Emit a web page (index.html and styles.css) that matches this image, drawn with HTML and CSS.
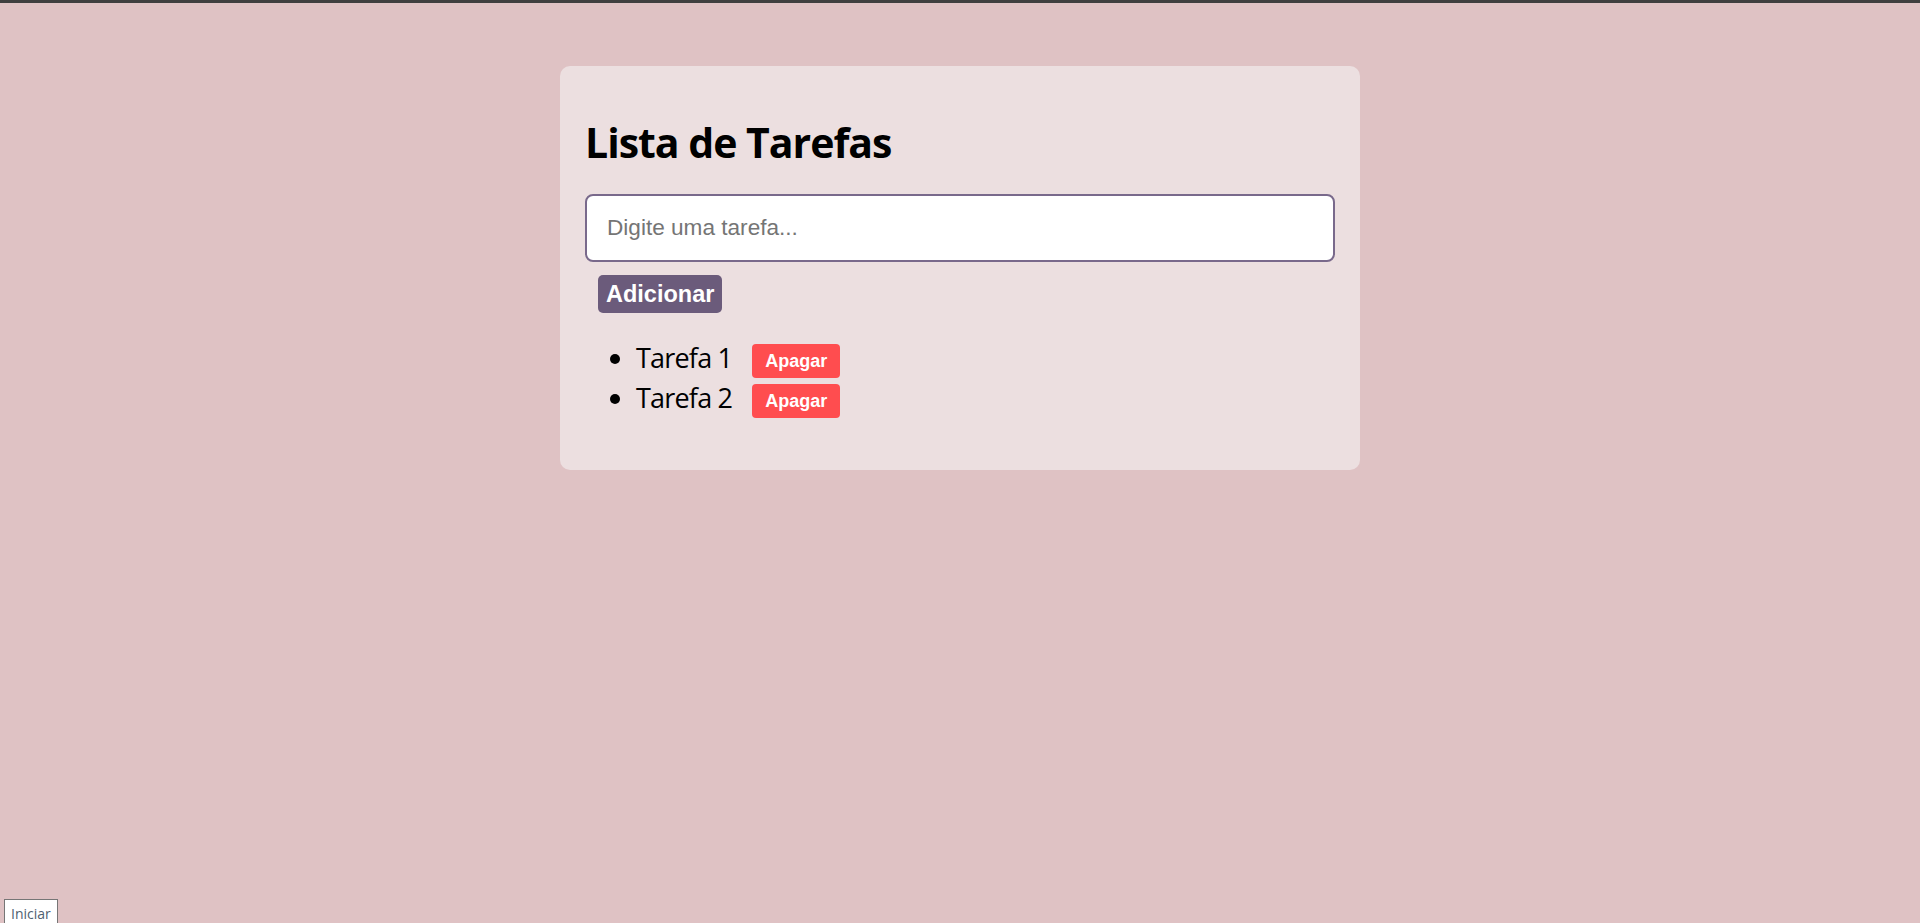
FILE: index.html
```html
<!DOCTYPE html>
<html lang="pt">
<head>
<meta charset="utf-8">
<title>Lista de Tarefas</title>
<link rel="stylesheet" href="styles.css">
</head>
<body>
<main class="page">
  <section class="card">
    <h1 class="title">Lista de Tarefas</h1>
    <input class="task-input" type="text" placeholder="Digite uma tarefa...">
    <button class="add-btn">Adicionar</button>
    <ul class="task-list">
      <li class="task"><span class="task-text">Tarefa 1</span><button class="del-btn">Apagar</button></li>
      <li class="task"><span class="task-text">Tarefa 2</span><button class="del-btn">Apagar</button></li>
    </ul>
  </section>
</main>
<button class="start-btn">Iniciar</button>
</body>
</html>
```

FILE: styles.css
```css
html, body {
  margin: 0;
  padding: 0;
}
body {
  background: #dfc2c4;
  border-top: 3px solid #3f3f3f;
  min-height: 920px;
  font-family: "Open Sans", "Noto Sans", sans-serif;
  color: #000;
}
.page {
  padding-top: 63px;
}
.card {
  width: 800px;
  box-sizing: border-box;
  margin: 0 auto;
  padding: 25px;
  background: #ecdfe0;
  border-radius: 10px;
}
.title {
  margin: 23px 0 24px;
  font-size: 41px;
  line-height: 56px;
  font-weight: 700;
  letter-spacing: -1px;
}
.task-input {
  display: block;
  width: 100%;
  box-sizing: border-box;
  height: 68px;
  margin: 0;
  padding: 0 20px;
  border: 2px solid #79698b;
  border-radius: 8px;
  background: #fff;
  font-family: "Liberation Sans", Arial, sans-serif;
  font-size: 22.6px;
  color: #000;
  outline: none;
}
.task-input::placeholder {
  color: #757575;
}
.add-btn {
  display: block;
  margin: 13px 0 0 13px;
  height: 38px;
  padding: 0 8px;
  border: none;
  border-radius: 5px;
  background: #6b5b7b;
  color: #fff;
  font-family: "Liberation Sans", Arial, sans-serif;
  font-weight: 700;
  font-size: 23.5px;
}
.task-list {
  margin: 25px 0 27px;
  padding-left: 51px;
}
.task {
  height: 40px;
  line-height: 40px;
  font-size: 27px;
}
.task-text {
  letter-spacing: -0.8px;
}
.del-btn {
  display: inline-block;
  vertical-align: middle;
  margin-left: 20px;
  height: 34px;
  padding: 0 13px;
  border: none;
  border-radius: 4px;
  background: #ff4d4f;
  color: #fff;
  font-family: "Liberation Sans", Arial, sans-serif;
  font-weight: 700;
  font-size: 18px;
  line-height: 34px;
  letter-spacing: 0;
}
.start-btn {
  position: fixed;
  left: 4px;
  bottom: -5px;
  height: 29px;
  padding: 0 6px;
  border: 1px solid #767676;
  background: #fff;
  color: #4f6070;
  font-family: "Open Sans", "Noto Sans", sans-serif;
  font-size: 14px;
  line-height: 20px;
}
```
